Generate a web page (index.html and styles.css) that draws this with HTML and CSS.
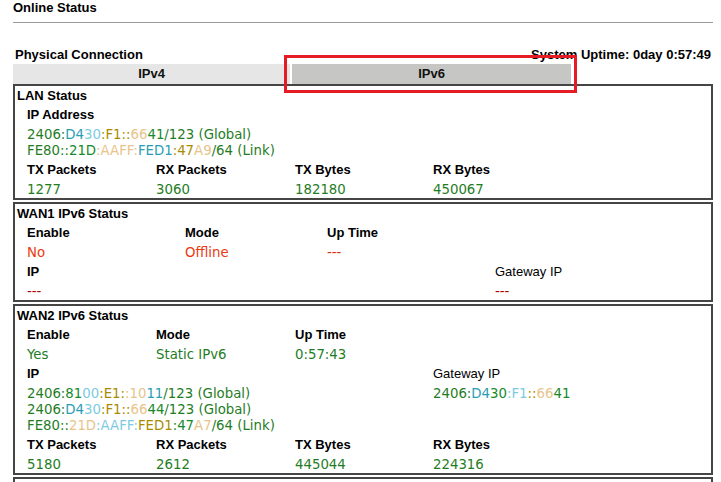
FILE: index.html
```html
<!DOCTYPE html>
<html>
<head>
<meta charset="utf-8">
<link rel="stylesheet" href="styles.css">
</head>
<body>
<div class="page">
  <div class="title">Online Status</div>
  <div class="phys"><span>Physical Connection</span><span>System Uptime: 0day 0:57:49</span></div>
  <div class="tabs"><div class="tab tab-v4">IPv4</div><div class="tab tab-v6">IPv6</div></div>

  <div class="box">
    <div class="box-title">LAN Status</div>
    <div class="row lbl">IP Address</div>
    <div class="row val multi">
      <div>2406:<span class="m1">D4</span><span class="m3">30</span><span class="m2">:F1::</span><span class="m5">66</span><span class="m4">41</span>/123 (Global)</div>
      <div>FE80::<span class="m4">21D</span><span class="m5">:AAFF:</span><span class="m1">FED1</span><span class="m2">:47</span><span class="m5">A9</span>/64 (Link)</div>
    </div>
    <div class="row lbl g-a"><span>TX Packets</span><span>RX Packets</span><span>TX Bytes</span><span>RX Bytes</span></div>
    <div class="row val g-a"><span>1277</span><span>3060</span><span>182180</span><span>450067</span></div>
  </div>

  <div class="box">
    <div class="box-title">WAN1 IPv6 Status</div>
    <div class="row lbl g-b"><span>Enable</span><span>Mode</span><span>Up Time</span></div>
    <div class="row val g-b"><span class="red">No</span><span class="red">Offline</span><span class="red2">---</span></div>
    <div class="row lbl g-c"><span>IP</span><span class="norm">Gateway IP</span></div>
    <div class="row val g-c"><span class="dred">---</span><span class="dred">---</span></div>
  </div>

  <div class="box">
    <div class="box-title">WAN2 IPv6 Status</div>
    <div class="row lbl g-a"><span>Enable</span><span>Mode</span><span>Up Time</span></div>
    <div class="row val g-a"><span>Yes</span><span>Static IPv6</span><span>0:57:43</span></div>
    <div class="row lbl g-d"><span>IP</span><span class="norm">Gateway IP</span></div>
    <div class="row val g-d">
      <div class="multi">
        <div>2406:<span class="m4">81</span><span class="m3">00</span><span class="m2">:E1:</span><span class="m5">:10</span><span class="m1">11</span>/123 (Global)</div>
        <div>2406:<span class="m1">D4</span><span class="m3">30</span><span class="m2">:F1::</span><span class="m5">66</span><span class="m4">44</span>/123 (Global)</div>
        <div>FE80::<span class="m5">21D</span><span class="m3">:AAFF:</span><span class="m2">FED1</span><span class="m4">:47</span><span class="m5">A7</span>/64 (Link)</div>
      </div>
      <div class="multi">
        <div>2406:<span class="m1">D4</span><span class="m4">30</span><span class="m3">:F1</span><span class="m2">::</span><span class="m5">66</span><span class="m4">41</span></div>
      </div>
    </div>
    <div class="row lbl g-a"><span>TX Packets</span><span>RX Packets</span><span>TX Bytes</span><span>RX Bytes</span></div>
    <div class="row val g-a"><span>5180</span><span>2612</span><span>445044</span><span>224316</span></div>
  </div>

  <div class="box box-cut"></div>

  <div class="highlight"></div>
</div>
</body>
</html>
```

FILE: styles.css
```css
html, body {
  margin: 0;
  background: #ffffff;
}
body {
  font-family: "Liberation Sans", Arial, sans-serif;
  font-size: 13px;
  color: #000;
  overflow: hidden;
}
*, *::before, *::after {
  box-sizing: border-box;
}
.page {
  position: relative;
  margin-left: 13px;
  width: 700px;
}
.title {
  font-weight: bold;
  line-height: 15px;
  height: 23px;
  padding-bottom: 7px;
  border-bottom: 1px solid #9a9a9a;
}
.phys {
  display: flex;
  justify-content: space-between;
  margin-top: 22px;
  height: 19px;
  line-height: 19px;
  font-weight: bold;
  padding: 0 2px;
}
.tabs {
  display: flex;
  gap: 2px;
  height: 20px;
}
.tab {
  line-height: 20px;
  text-align: center;
  font-weight: bold;
  color: #111;
}
.tab-v4 {
  width: 277px;
  background: #e6e6e6;
}
.tab-v6 {
  width: 279px;
  background: #c6c7c4;
}
.box {
  border: 2px solid #454545;
}
.box + .box {
  margin-top: 2px;
}
.box-cut {
  height: 40px;
}
.box-title {
  height: 18px;
  line-height: 20px;
  padding-left: 2px;
  font-weight: bold;
}
.row {
  padding-left: 12px;
}
.lbl {
  height: 19px;
  line-height: 21px;
  font-weight: bold;
}
.norm {
  font-weight: normal;
}
.val {
  height: 20px;
  line-height: 24px;
  font-family: "DejaVu Sans", Verdana, sans-serif;
  font-size: 13.3px;
  color: #1f7d1f;
}
.multi {
  line-height: 16px;
  padding-top: 4px;
}
.val.multi {
  height: 36px;
}
.g-d.val {
  height: 52px;
}
.g-a {
  display: grid;
  grid-template-columns: 129px 139px 138px 1fr;
}
.g-b {
  display: grid;
  grid-template-columns: 158px 142px 1fr;
}
.g-c {
  display: grid;
  grid-template-columns: 468px 1fr;
}
.g-d {
  display: grid;
  grid-template-columns: 406px 1fr;
}
.red { color: #ea3a12; }
.red2 { color: #e0280c; }
.dred { color: #b00000; }
.m1 { color: #2a9cb4; }
.m2 { color: #a88c00; }
.m3 { color: #7ccbe0; }
.m4 { color: #168a2a; }
.m5 { color: #e8c48a; }
.highlight {
  position: absolute;
  left: 271px;
  top: 55px;
  width: 293px;
  height: 38px;
  border: 3px solid #e51c23;
  pointer-events: none;
}
```
